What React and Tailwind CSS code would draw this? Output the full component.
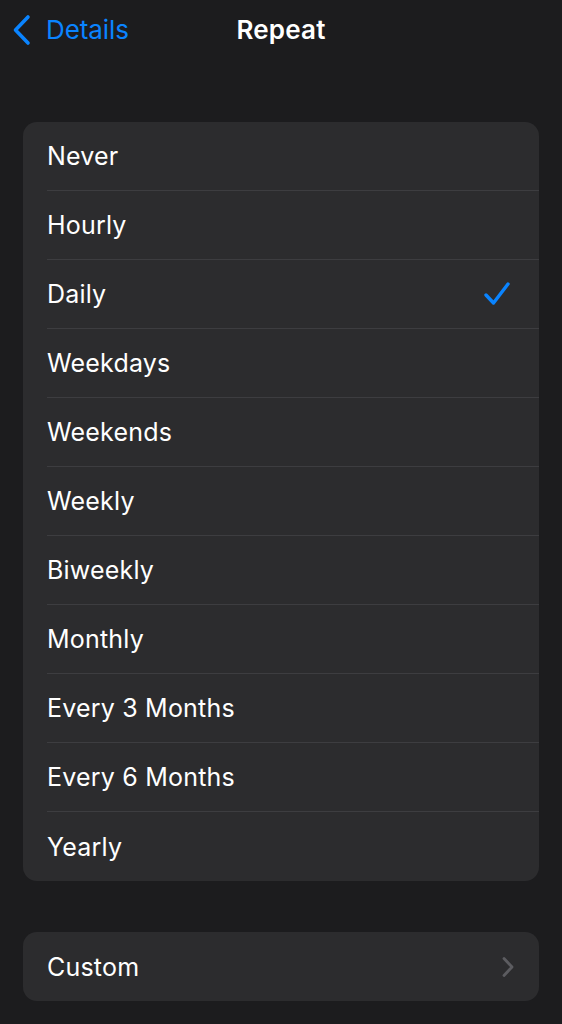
const OPTIONS = [
  "Never",
  "Hourly",
  "Daily",
  "Weekdays",
  "Weekends",
  "Weekly",
  "Biweekly",
  "Monthly",
  "Every 3 Months",
  "Every 6 Months",
  "Yearly",
]

const SELECTED = "Daily"

export default function App() {
  return (
    <div
      className="w-[562px] h-[1024px] bg-[#1c1c1e] text-white overflow-hidden"
      style={{ fontFamily: "Inter, 'Noto Sans', sans-serif" }}
    >
      {/* Nav bar */}
      <div className="relative h-[60px] flex items-center justify-center">
        <div className="absolute left-[12px] top-[14px] flex items-center gap-[15px] text-[#0a84ff]">
          <svg width="19" height="32" viewBox="0 0 19 32" fill="none">
            <path d="M16 3 L3.5 16 L16 29" stroke="#0a84ff" strokeWidth="3.6" strokeLinecap="round" strokeLinejoin="round" />
          </svg>
          <span className="text-[26px] leading-none tracking-[-0.1px]">Details</span>
        </div>
        <span className="text-[26px] font-semibold tracking-[0.2px] leading-none">Repeat</span>
      </div>

      {/* Options */}
      <div className="mt-[62px] mx-[23px] rounded-[14px] bg-[#2c2c2e] overflow-hidden">
        {OPTIONS.map((opt, i) => (
          <div key={opt} className="pl-[24px]">
            <div
              className={`h-[69px] flex items-center justify-between pr-[28px] ${
                i < OPTIONS.length - 1 ? "border-b border-[#3d3d40]" : ""
              }`}
            >
              <span className="text-[25px] tracking-[0.2px] pt-[2px]">{opt}</span>
              {opt === SELECTED && (
                <svg width="28" height="26" viewBox="0 0 28 26" fill="none">
                  <path d="M3 14 L10.5 22 L25 3" stroke="#0a84ff" strokeWidth="3.4" strokeLinecap="round" strokeLinejoin="round" />
                </svg>
              )}
            </div>
          </div>
        ))}
      </div>

      {/* Custom */}
      <div className="mt-[51px] mx-[23px] rounded-[14px] bg-[#2c2c2e] h-[69px] pl-[24px] pr-[24px] flex items-center justify-between">
        <span className="text-[25px] tracking-[0.2px] pt-[2px]">Custom</span>
        <svg width="14" height="22" viewBox="0 0 14 22" fill="none">
          <path d="M3 2.5 L11 11 L3 19.5" stroke="#5c5c60" strokeWidth="2.8" strokeLinecap="round" strokeLinejoin="round" />
        </svg>
      </div>
    </div>
  )
}
